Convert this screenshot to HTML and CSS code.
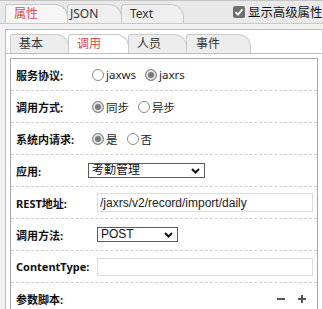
FILE: index.html
```html
<!DOCTYPE html>
<html lang="zh-CN">
<head>
    <meta charset="UTF-8">
    <meta name="viewport" content="width=device-width, initial-scale=1.0">
    <title>属性</title>
    <link rel="stylesheet" href="styles.css">
</head>
<body>
    <!-- Top tab strip -->
    <div class="topbar">
        <div class="tabs">
            <div class="tab active">属性</div>
            <div class="tab tab-json">JSON</div>
            <div class="tab">Text</div>
        </div>
        <label class="advanced">
            <span class="check">
                <svg width="12" height="12" viewBox="0 0 12 12"><polyline points="2.5,6.2 5,8.6 9.5,3.4" fill="none" stroke="#fff" stroke-width="1.8"/></svg>
            </span>
            <span>显示高级属性</span>
        </label>
    </div>

    <div class="panel">
        <!-- Sub tabs -->
        <div class="subtabs">
            <div class="subtab t1">基本</div>
            <div class="subtab t2 active">调用</div>
            <div class="subtab t3">人员</div>
            <div class="subtab t4">事件</div>
        </div>

        <div class="form">
            <div class="row">
                <div class="label">服务协议:</div>
                <div class="choices">
                    <label class="choice"><input type="radio" name="proto">jaxws</label>
                    <label class="choice"><input type="radio" name="proto" checked>jaxrs</label>
                </div>
            </div>
            <div class="row">
                <div class="label">调用方式:</div>
                <div class="choices">
                    <label class="choice"><input type="radio" name="mode" checked>同步</label>
                    <label class="choice"><input type="radio" name="mode">异步</label>
                </div>
            </div>
            <div class="row">
                <div class="label">系统内请求:</div>
                <div class="choices">
                    <label class="choice"><input type="radio" name="inner" checked>是</label>
                    <label class="choice"><input type="radio" name="inner">否</label>
                </div>
            </div>
            <div class="row">
                <div class="label">应用:</div>
                <div class="select app-select">
                    <select><option>考勤管理</option></select>
                    <svg class="chevron" width="9" height="6" viewBox="0 0 9 6"><polyline points="1,1 4.5,4.5 8,1" fill="none" stroke="#111" stroke-width="2"/></svg>
                </div>
            </div>
            <div class="row wide">
                <div class="label">REST地址:</div>
                <input class="text-input" type="text" value="/jaxrs/v2/record/import/daily">
            </div>
            <div class="row wide">
                <div class="label">调用方法:</div>
                <div class="select method-select">
                    <select><option>POST</option></select>
                    <svg class="chevron" width="9" height="6" viewBox="0 0 9 6"><polyline points="1,1 4.5,4.5 8,1" fill="none" stroke="#111" stroke-width="2"/></svg>
                </div>
            </div>
            <div class="row wide">
                <div class="label">ContentType:</div>
                <input class="text-input short" type="text" value="">
            </div>
            <div class="row last">
                <div class="label">参数脚本:</div>
                <div class="tools">
                    <svg width="8" height="8" viewBox="0 0 8 8"><line x1="0" y1="4" x2="8" y2="4" stroke="#555" stroke-width="2"/></svg>
                    <svg width="8" height="8" viewBox="0 0 8 8"><line x1="0" y1="4" x2="8" y2="4" stroke="#555" stroke-width="2"/><line x1="4" y1="0" x2="4" y2="8" stroke="#555" stroke-width="2"/></svg>
                </div>
            </div>
        </div>
    </div>
</body>
</html>
```

FILE: styles.css
```css
html, body {
    margin: 0;
}

body {
    width: 323px;
    height: 309px;
    overflow: hidden;
    background-color: #f1f1f1;
    font-family: "Noto Sans", "Noto Sans CJK SC", sans-serif;
    font-size: 12px;
    color: #222;
}

/* Top tab strip */
.topbar {
    display: flex;
    align-items: flex-end;
    height: 22px;
    padding-left: 5px;
    border-top: 1px solid #c4c4c4;
    border-bottom: 1px solid #c8c8c8;
    background-color: #e9e9e9;
    overflow: hidden;
}

.tabs {
    display: flex;
    flex-shrink: 0;
}

.tab {
    box-sizing: border-box;
    width: 63px;
    height: 19px;
    line-height: 18px;
    padding-left: 8px;
    border: 1px solid #c8c8c8;
    border-bottom: none;
    border-radius: 3px 13px 0 0;
    background-color: #efefef;
    color: #333;
}

.tab + .tab {
    margin-left: -1px;
}

.tab-json {
    width: 55px;
    padding-left: 2px;
}

.tab.active {
    background-color: #f6f6f6;
    color: #e0484f;
}

.advanced {
    display: flex;
    align-items: center;
    align-self: center;
    flex-shrink: 0;
    gap: 3px;
    margin-left: 49px;
    font-size: 12.4px;
    color: #111;
    white-space: nowrap;
}

.check {
    display: flex;
    width: 12px;
    height: 12px;
    border-radius: 2px;
    background-color: #6f6f6f;
}

/* Main panel */
.panel {
    margin: 5px 0 0 5px;
    height: 279px;
    overflow: hidden;
    border: 1px solid #bdbdbd;
    border-right-color: #d4d4d4;
    border-bottom: none;
    background-color: #fff;
}

.subtabs {
    display: flex;
    padding: 4px 0 0 4px;
    border-bottom: 1px solid #bdbdbd;
}

.subtab {
    box-sizing: border-box;
    height: 19px;
    line-height: 18px;
    padding-left: 8px;
    border: 1px solid #cacaca;
    border-bottom: none;
    border-radius: 3px 13px 0 0;
    background-color: #ededed;
    color: #333;
}

.subtab + .subtab {
    margin-left: -1px;
}

.subtab.t1 { width: 59px; }
.subtab.t2 { width: 61px; }
.subtab.t3 { width: 59px; }
.subtab.t4 { width: 65px; padding-left: 9px; }

.subtab.active {
    background-color: #fff;
    color: #e0484f;
}

/* Form box */
.form {
    margin: 4px 4px 0;
    border: 1px solid #a9a9a9;
    border-bottom: none;
    height: 260px;
}

.row {
    display: grid;
    grid-template-columns: 72px 1fr;
    align-items: center;
    height: 31px;
    padding-left: 5px;
    border-bottom: 1px dashed #cfcfcf;
}

.row.wide {
    grid-template-columns: 81px 1fr;
}

.row.last {
    grid-template-columns: auto 1fr;
    border-bottom: none;
}

.label {
    font-size: 11px;
    font-weight: bold;
    color: #111;
    white-space: nowrap;
}

/* Radios */
.choices {
    display: flex;
    align-items: center;
}

.choice {
    display: flex;
    align-items: center;
    margin-right: 5px;
    font-size: 11.5px;
    color: #222;
}

.choice input {
    appearance: none;
    box-sizing: border-box;
    width: 12px;
    height: 12px;
    margin: 0 2px 0 4px;
    border: 1px solid #8a8a8a;
    border-radius: 50%;
    background-color: #fff;
}

.choice input:checked {
    background-color: #7a7a7a;
    box-shadow: inset 0 0 0 2px #e2e2e2;
}

/* Selects */
.select {
    position: relative;
    display: inline-flex;
    justify-self: start;
}

.select select {
    appearance: none;
    box-sizing: border-box;
    height: 15px;
    margin: 0;
    padding: 0 0 0 3px;
    border: 1px solid #5a5a5a;
    border-radius: 0;
    background-color: #fff;
    font-family: "Liberation Sans", "Noto Sans CJK SC", sans-serif;
    font-size: 12px;
    line-height: 13px;
    color: #111;
}

.app-select select {
    width: 117px;
}

.method-select select {
    width: 81px;
}

.chevron {
    position: absolute;
    top: 5px;
    right: 5px;
}

/* Text inputs */
.text-input {
    box-sizing: border-box;
    width: 216px;
    height: 19px;
    margin: 0;
    padding: 0 2px;
    border: 1px solid #dcdcdc;
    font-family: "Liberation Sans", Arial, sans-serif;
    font-size: 12px;
    color: #222;
    outline: none;
}

.text-input.short {
    height: 18px;
}

.tools {
    display: flex;
    justify-content: flex-end;
    gap: 13px;
    padding-right: 11px;
}
```
